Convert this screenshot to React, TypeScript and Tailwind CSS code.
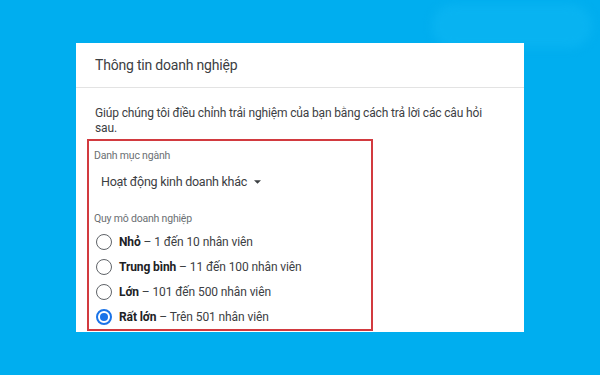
import React from "react";

const options = [
  { bold: "Nhỏ", rest: "1 đến 10 nhân viên", checked: false },
  { bold: "Trung bình", rest: "11 đến 100 nhân viên", checked: false },
  { bold: "Lớn", rest: "101 đến 500 nhân viên", checked: false },
  { bold: "Rất lớn", rest: "Trên 501 nhân viên", checked: true },
];

const Radio = ({ checked }: { checked: boolean }) => {
  if (checked) {
    return (
      <span className="w-4 h-4 rounded-full border-2 border-[#1a73e8] flex items-center justify-center shrink-0">
        <span className="w-2 h-2 rounded-full bg-[#1a73e8]" />
      </span>
    );
  }
  return <span className="w-4 h-4 rounded-full border-[1.5px] border-[#5f6368] shrink-0" />;
};

const App = () => {
  return (
    <div
      className="relative w-[600px] h-[375px] overflow-hidden bg-[#00aeef] pt-[43px] pl-[76px]"
      style={{ fontFamily: "Roboto, 'Noto Sans', sans-serif" }}
    >
      {/* soft light blob top right */}
      <div className="absolute left-[432px] top-[4px] w-[160px] h-[44px] rounded-[30px] bg-[#08b3f1] blur-[4px]" />

      <div className="relative w-[448px] h-[289px] bg-white">
        <div className="h-[45px] border-b border-[#e3e3e3] flex items-center pl-[19px]">
          <p className="text-[14px] tracking-[-0.2px] text-[#3c4043]">Thông tin doanh nghiệp</p>
        </div>

        <div className="pt-[18px]">
          <p className="pl-[19px] w-[425px] text-[12px] leading-[15px] tracking-[-0.15px] text-[#3c4043]">
            Giúp chúng tôi điều chỉnh trải nghiệm của bạn bằng cách trả lời các câu hỏi sau.
          </p>

          <div className="ml-[11px] mt-[3px] w-[286px] h-[192px] border-2 border-[#d23a3f] pt-[8px] pl-[5px]">
            <p className="text-[10.5px] leading-[13px] tracking-[-0.2px] text-[#6b6f73]">Danh mục ngành</p>

            <button className="mt-[11px] ml-[7px] flex items-center gap-[7px] text-[12.5px] leading-[17px] tracking-[-0.25px] text-[#3c4043]">
              <span>Hoạt động kinh doanh khác</span>
              <svg viewBox="0 0 10 5" className="w-[7px] h-[4px] fill-[#3c4043]">
                <path d="M0 0 L10 0 L5 5 Z" />
              </svg>
            </button>

            <p className="mt-[22px] text-[10.5px] leading-[13px] tracking-[-0.2px] text-[#6b6f73]">Quy mô doanh nghiệp</p>

            <div className="mt-[4px] flex flex-col">
              {options.map((o) => (
                <label key={o.bold} className="h-[25px] flex items-center pl-[2px]">
                  <Radio checked={o.checked} />
                  <span className="ml-[7px] text-[12px] tracking-[-0.1px] text-[#3c4043]">
                    <span className="font-bold text-[#202124]">{o.bold}</span> – {o.rest}
                  </span>
                </label>
              ))}
            </div>
          </div>
        </div>
      </div>
    </div>
  );
};

export default App;
